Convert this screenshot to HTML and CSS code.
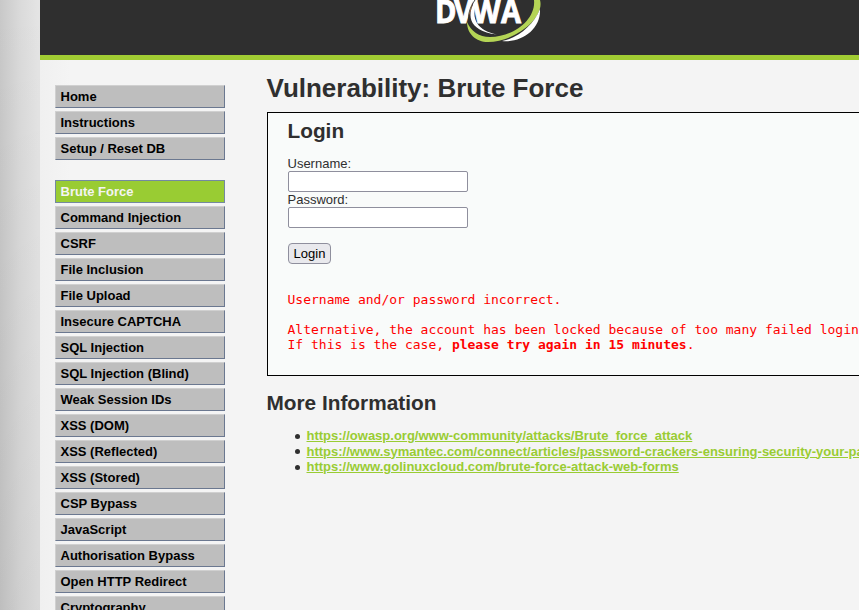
FILE: index.html
```html
<!DOCTYPE html>
<html lang="en">
<head>
<meta charset="utf-8">
<title>Vulnerability: Brute Force</title>
<link rel="stylesheet" href="styles.css">
</head>
<body>
<div class="container">
  <header class="header">
    <svg class="logo" width="110" height="46" viewBox="0 0 110 46" role="img" aria-label="DVWA">
      <path d="M99 0C101 19 79 37 55 37C44 37 36 31 32 22C32 34 41 42 53 42C80 42 110 18 105 0Z" fill="#b4d455"/>
      <path d="M105 9C99 24 84 38 67 41C87 43 106 29 105 9Z" fill="#fff"/>
      <text class="logo-text" transform="scale(.88 1)" x="0 21.5 42.5 75" y="23">DVWA</text>
      <path d="M41 0C32 12 31 31 62 34.5C44 31 34 20 42.5 0Z" fill="#fff"/>
      <path d="M40 0C34.500 8 33 14 33.500 23" fill="none" stroke="#2f2f2f" stroke-width=".9"/>
    </svg>
  </header>
  <div class="columns">
    <nav class="menu">
      <ul>
        <li>Home</li>
        <li>Instructions</li>
        <li>Setup / Reset DB</li>
      </ul>
      <ul>
        <li class="selected">Brute Force</li>
        <li>Command Injection</li>
        <li>CSRF</li>
        <li>File Inclusion</li>
        <li>File Upload</li>
        <li>Insecure CAPTCHA</li>
        <li>SQL Injection</li>
        <li>SQL Injection (Blind)</li>
        <li>Weak Session IDs</li>
        <li>XSS (DOM)</li>
        <li>XSS (Reflected)</li>
        <li>XSS (Stored)</li>
        <li>CSP Bypass</li>
        <li>JavaScript</li>
        <li>Authorisation Bypass</li>
        <li>Open HTTP Redirect</li>
        <li>Cryptography</li>
      </ul>
    </nav>
    <main class="main">
      <h1>Vulnerability: Brute Force</h1>
      <section class="panel">
        <h2>Login</h2>
        <form>
          <label for="user">Username:</label>
          <input id="user" type="text">
          <label for="pass">Password:</label>
          <input id="pass" type="password">
          <button type="button">Login</button>
        </form>
        <pre>Username and/or password incorrect.

Alternative, the account has been locked because of too many failed logins.
If this is the case, <b>please try again in 15 minutes</b>.</pre>
      </section>
      <h2 class="more">More Information</h2>
      <ul class="links">
        <li><a href="#">https://owasp.org/www-community/attacks/Brute_force_attack</a></li>
        <li><a href="#">https://www.symantec.com/connect/articles/password-crackers-ensuring-security-your-password</a></li>
        <li><a href="#">https://www.golinuxcloud.com/brute-force-attack-web-forms</a></li>
      </ul>
    </main>
  </div>
</div>
</body>
</html>
```
FILE: styles.css
```css
* { box-sizing: border-box; }
html { height: 100%; overflow: hidden; }
body {
  margin: 0;
  height: 610px;
  overflow: hidden;
  padding-left: 40px;
  background:
    linear-gradient(to bottom, rgba(0, 0, 0, 0), rgba(0, 0, 0, .05)),
    linear-gradient(to right, #c8c8c8 0, #dadada 20px, #e4e4e4 38px);
  color: #2f2f2f;
  font: 13px/15px "Liberation Sans", Arial, sans-serif;
}
.container { height: 610px; overflow: hidden; background: linear-gradient(to right, #f0f0f0 0, #f4f4f4 30px); }
.header { height: 60px; background: #2f2f2f; border-bottom: 5px solid #a1cc33; padding-left: 395px; }
.logo { display: block; }
.logo-text { font: 700 33px "Open Sans", sans-serif; fill: #fff; stroke: #fff; stroke-width: .9px; }
.columns { display: flex; padding-left: 15px; }
.menu { flex: none; width: 170px; padding-top: 25px; }
ul { margin: 0; padding: 0; list-style: none; }
.menu ul { display: flex; flex-direction: column; gap: 3px; margin-bottom: 20px; }
.menu li {
  height: 23px;
  padding: 3px 4.5px;
  background: #bebebe;
  border: 1px solid;
  border-color: #d0d0d0 #6b7890 #6b7890 #d0d0d0;
  color: #000;
  font-weight: bold;
}
.menu .selected { background: #9c3; border-color: #7489a0; color: #f4f4f4; }
.main { flex: none; width: 690px; margin-left: 42px; padding-top: 13px; }
h1 { margin: 0; font-size: 26px; line-height: 30px; margin-left: -.5px; }
.panel { height: 264px; margin-top: 9px; padding: 6px 20px; background: #f9fbfa; border: 1px solid #000; }
h2 { margin: 0 0 0 -.5px; font-size: 20.8px; line-height: 24px; }
form { display: flex; flex-direction: column; align-items: flex-start; margin-top: 13px; }
label { height: 15px; margin-left: -.5px; }
input { width: 180px; height: 21px; border: 1px solid #8f8f9d; border-radius: 2px; background: #fff; padding: 1px 2px; }
button {
  width: 43px;
  height: 21px;
  margin-top: 15px;
  padding: 0;
  border: 1px solid #8f8f9d;
  border-radius: 4px;
  background: #e9e9ed;
  color: #000;
  font: 13px/19px "Liberation Sans", Arial, sans-serif;
}
pre { margin: 28px 0 0 -.5px; color: red; font: 13px/15px "DejaVu Sans Mono", monospace; }
.more { margin-top: 15px; }
.links { margin-top: 13px; padding-left: 28px; }
.links li { display: flex; align-items: center; line-height: 15.5px; }
.links li::before { content: ""; flex: none; width: 5px; height: 5px; margin: 1px 6.5px 0 0; border-radius: 50%; background: #2f2f2f; }
.links a { color: #9c3; font-weight: bold; white-space: nowrap; }
```
